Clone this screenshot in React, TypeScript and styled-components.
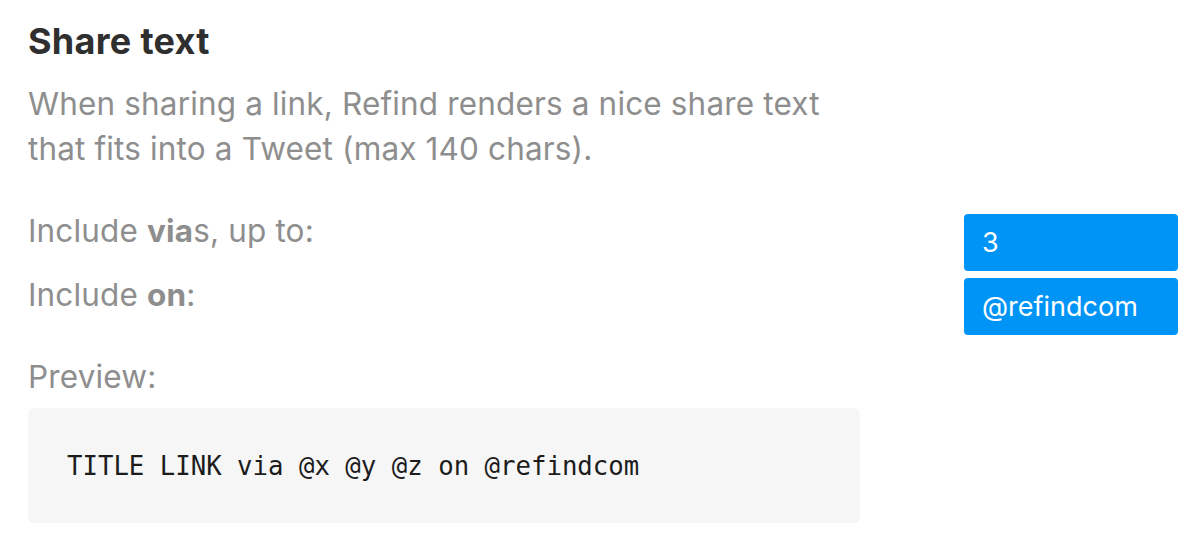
import * as React from "react";
import styled, {createGlobalStyle} from "styled-components";

const GlobalStyle = createGlobalStyle`
  html, body {
    margin: 0;
    padding: 0;
    background: #FFFFFF;
  }
  body {
    font-family: Inter, "Noto Sans", sans-serif;
    -webkit-font-smoothing: antialiased;
  }
`;

const Page = styled.div`
  padding: 20px 22px 20px 28px;
`;

const Title = styled.h2`
  margin: 0;
  font-size: 36px;
  line-height: 42px;
  font-weight: 700;
  color: #2f2f2f;
  letter-spacing: 0.3px;
`;

const Description = styled.p`
  margin: 19px 0 0;
  max-width: 820px;
  font-size: 31.5px;
  line-height: 45px;
  letter-spacing: 0.15px;
  color: #8e8e8e;
`;

const Options = styled.div`
  margin-top: 43px;
  display: flex;
  flex-direction: column;
  gap: 7px;
`;

const OptionRow = styled.div`
  display: flex;
  justify-content: space-between;
  align-items: flex-start;
`;

const Label = styled.div`
  font-size: 31.5px;
  line-height: 33px;
  letter-spacing: 0.15px;
  color: #8e8e8e;

  b {
    font-weight: 700;
  }
`;

const Field = styled.div`
  box-sizing: border-box;
  width: 214px;
  height: 57px;
  padding: 0 18px;
  display: flex;
  align-items: center;
  background: #0094f6;
  border-radius: 4px;
  color: #FFFFFF;
  font-size: 27px;
`;

const PreviewLabel = styled(Label)`
  margin-top: 25px;
`;

const PreviewBox = styled.div`
  box-sizing: border-box;
  margin-top: 15px;
  width: 832px;
  height: 115px;
  padding: 0 39px;
  display: flex;
  align-items: center;
  background: #f6f6f6;
  border-radius: 6px;
  font-family: "DejaVu Sans Mono", "Liberation Mono", monospace;
  font-size: 25.7px;
  color: #1c1c1c;
`;

const options = [
  {id: "vias", label: <>Include <b>via</b>s, up to:</>, value: "3"},
  {id: "on", label: <>Include <b>on</b>:</>, value: "@refindcom"},
];

const App = () => {
  return (
    <Page>
      <GlobalStyle/>
      <Title>Share text</Title>
      <Description>
        When sharing a link, Refind renders a nice share text that fits into a Tweet (max 140 chars).
      </Description>
      <Options>
        {options.map((option) => (
          <OptionRow key={option.id}>
            <Label>{option.label}</Label>
            <Field>{option.value}</Field>
          </OptionRow>
        ))}
      </Options>
      <PreviewLabel>Preview:</PreviewLabel>
      <PreviewBox>TITLE LINK via @x @y @z on @refindcom</PreviewBox>
    </Page>
  )
};

export default App;
